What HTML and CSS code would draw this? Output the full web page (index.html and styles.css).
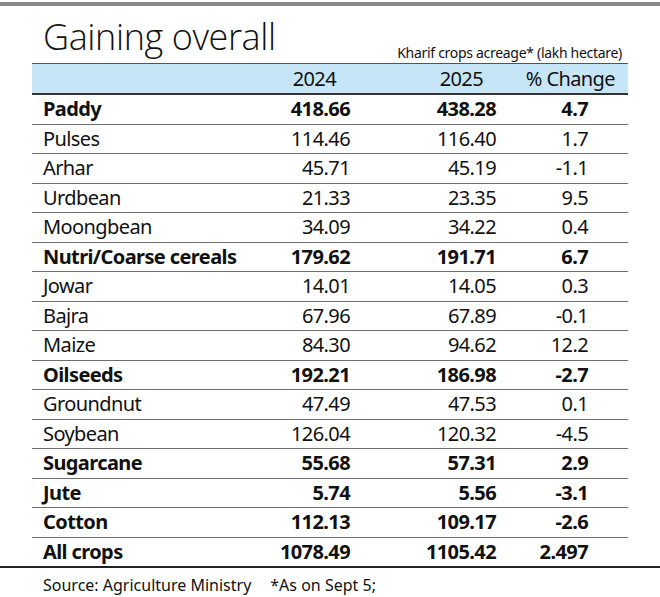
FILE: index.html
```html
<!DOCTYPE html>
<html>
<head>
<meta charset="utf-8">
<link rel="stylesheet" href="styles.css">
</head>
<body>
<div class="page">
  <div class="topbar"></div>
  <div class="head">
    <h1 class="title">Gaining overall</h1>
    <div class="subtitle">Kharif crops acreage* (lakh hectare)</div>
  </div>
  <table class="data">
    <colgroup>
      <col class="w-label">
      <col class="w-2024">
      <col class="w-2025">
      <col class="w-chg">
    </colgroup>
    <thead>
      <tr>
        <th class="c-label"></th>
        <th class="c-num">2024</th>
        <th class="c-num">2025</th>
        <th class="c-chg">% Change</th>
      </tr>
    </thead>
    <tbody>
      <tr class="bold"><td>Paddy</td><td>418.66</td><td>438.28</td><td>4.7</td></tr>
      <tr><td>Pulses</td><td>114.46</td><td>116.40</td><td>1.7</td></tr>
      <tr><td>Arhar</td><td>45.71</td><td>45.19</td><td>-1.1</td></tr>
      <tr><td>Urdbean</td><td>21.33</td><td>23.35</td><td>9.5</td></tr>
      <tr><td>Moongbean</td><td>34.09</td><td>34.22</td><td>0.4</td></tr>
      <tr class="bold"><td>Nutri/Coarse cereals</td><td>179.62</td><td>191.71</td><td>6.7</td></tr>
      <tr><td>Jowar</td><td>14.01</td><td>14.05</td><td>0.3</td></tr>
      <tr><td>Bajra</td><td>67.96</td><td>67.89</td><td>-0.1</td></tr>
      <tr><td>Maize</td><td>84.30</td><td>94.62</td><td>12.2</td></tr>
      <tr class="bold"><td>Oilseeds</td><td>192.21</td><td>186.98</td><td>-2.7</td></tr>
      <tr><td>Groundnut</td><td>47.49</td><td>47.53</td><td>0.1</td></tr>
      <tr><td>Soybean</td><td>126.04</td><td>120.32</td><td>-4.5</td></tr>
      <tr class="bold"><td>Sugarcane</td><td>55.68</td><td>57.31</td><td>2.9</td></tr>
      <tr class="bold"><td>Jute</td><td>5.74</td><td>5.56</td><td>-3.1</td></tr>
      <tr class="bold"><td>Cotton</td><td>112.13</td><td>109.17</td><td>-2.6</td></tr>
      <tr class="bold last"><td>All crops</td><td>1078.49</td><td>1105.42</td><td>2.497</td></tr>
    </tbody>
  </table>
  <div class="footer">
    <span class="source">Source: Agriculture Ministry</span>
    <span class="note">*As on Sept 5;</span>
  </div>
</div>
</body>
</html>
```

FILE: styles.css
```css
html, body {
  margin: 0;
  padding: 0;
  background: #ffffff;
}

.page {
  width: 660px;
  height: 597px;
  overflow: hidden;
  font-family: "Noto Sans", "DejaVu Sans", sans-serif;
  color: #111111;
}

.topbar {
  height: 4px;
  margin-top: 2px;
  background: #888888;
}

.head {
  display: flex;
  justify-content: space-between;
  align-items: flex-end;
  padding: 0 38px 0 43px;
  height: 57px;
}

.title {
  margin: 0;
  font-family: "Open Sans", sans-serif;
  font-weight: 300;
  font-size: 36px;
  line-height: 40px;
  letter-spacing: -0.4px;
  color: #111111;
  position: relative;
  top: -6px;
}

.subtitle {
  font-size: 14px;
  line-height: 18px;
  letter-spacing: -0.3px;
  padding-bottom: 1px;
}

.data {
  margin-left: 32px;
  width: 596px;
  table-layout: fixed;
  border-collapse: collapse;
  font-size: 20px;
  letter-spacing: -0.6px;
}

.w-label { width: 218px; }
.w-2024 { width: 100px; }
.w-2025 { width: 146px; }
.w-chg { width: 132px; }

.data thead tr {
  background: #c6e6f8;
  border-top: 1px solid #555555;
  border-bottom: 2px solid #333333;
}

.data th {
  font-weight: normal;
  height: 29px;
  padding: 0;
  text-align: right;
  vertical-align: middle;
}

.data th:nth-child(2) {
  padding-right: 14px;
}

.data th:nth-child(3) {
  padding-right: 13px;
}

.data th.c-chg {
  padding-right: 13px;
}

.data td {
  height: 28.5px;
  padding: 0;
  text-align: right;
  vertical-align: middle;
  line-height: 22px;
  white-space: nowrap;
}

.data td:first-child {
  text-align: left;
  padding-left: 11px;
}

.data td:last-child {
  padding-right: 40px;
}

.data tbody tr {
  border-bottom: 1px solid #6e6e6e;
}

.data tbody tr.last {
  border-bottom: none;
}

.data tr.bold td {
  font-weight: bold;
}

.footer {
  border-top: 2px solid #222222;
  display: flex;
  gap: 19px;
  padding: 7px 0 0 43px;
  font-size: 16px;
  line-height: 20px;
}
```
